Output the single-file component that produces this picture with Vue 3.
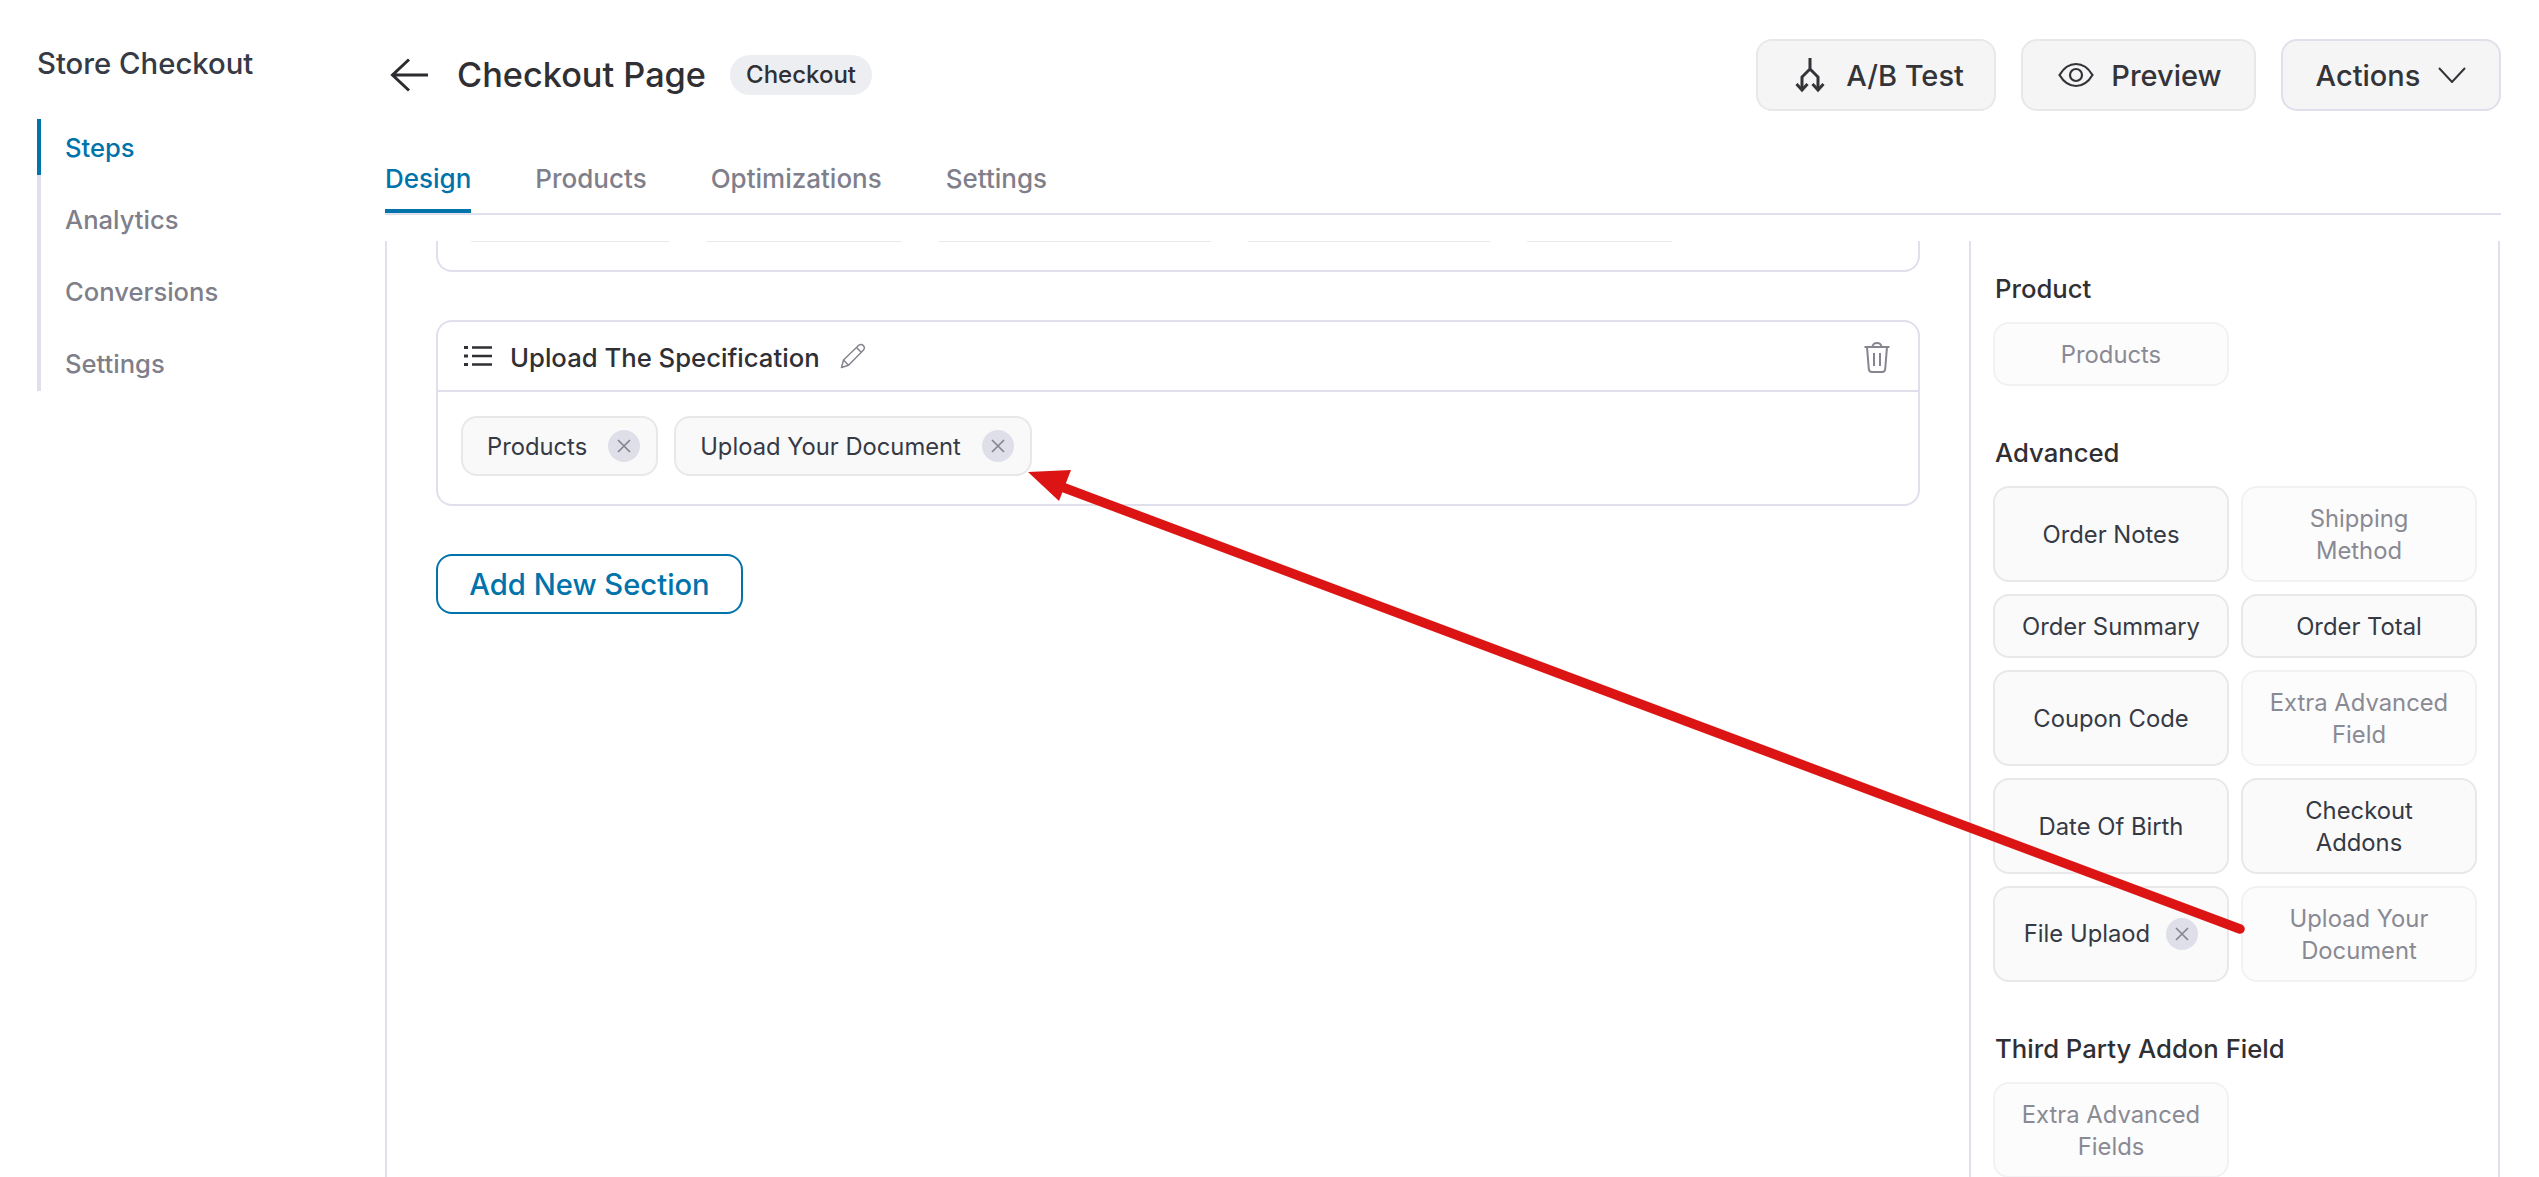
<script setup>
const navItems = ['Steps', 'Analytics', 'Conversions', 'Settings']
const tabs = ['Design', 'Products', 'Optimizations', 'Settings']
const stubs = [198, 196, 272, 242, 145]
const advanced = [
  { label: 'Order Notes' },
  { label: 'Shipping Method', off: true },
  { label: 'Order Summary', short: true },
  { label: 'Order Total', short: true },
  { label: 'Coupon Code' },
  { label: 'Extra Advanced Field', off: true },
  { label: 'Date Of Birth' },
  { label: 'Checkout Addons' },
  { label: 'File Uplaod', remove: true },
  { label: 'Upload Your Document', off: true }
]
</script>

<template>
  <div class="page">
    <aside class="side">
      <div class="store">Store Checkout</div>
      <nav class="nav">
        <a v-for="(n, i) in navItems" :key="n" class="nav-item" :class="{ active: i === 0 }">{{ n }}</a>
      </nav>
    </aside>

    <main class="main">
      <header class="head">
        <svg class="back" width="38" height="34" viewBox="0 0 38 34" fill="none" stroke="#2b2b30" stroke-width="3">
          <path d="M38 17H3M19 1.500 2.500 17 19 32.500" />
        </svg>
        <h1 class="title">Checkout Page</h1>
        <span class="badge">Checkout</span>
        <div class="actions">
          <button class="btn ab">
            <svg width="32" height="36" viewBox="0 0 32 36" fill="none" stroke="#333338" stroke-width="3">
              <path d="M16 1v11L8 20v12M16 12l8 8v12" />
              <path d="M2.500 27 8 33l5.500-6M18.500 27l5.500 6 5.500-6" stroke-linejoin="miter" />
            </svg>
            A/B Test
          </button>
          <button class="btn pv">
            <svg width="36" height="26" viewBox="0 0 36 26" fill="none" stroke="#333338" stroke-width="2.200">
              <path d="M1.500 13C6 5.500 11.500 2 18 2s12 3.500 16.500 11C30 20.500 24.500 24 18 24S6 20.500 1.500 13Z" />
              <circle cx="18" cy="13" r="6" />
            </svg>
            Preview
          </button>
          <button class="btn act">
            Actions
            <svg width="28" height="16" viewBox="0 0 28 16" fill="none" stroke="#333338" stroke-width="2">
              <path d="M1 1 14 15 27 1" />
            </svg>
          </button>
        </div>
      </header>

      <div class="tabs">
        <a v-for="(t, i) in tabs" :key="t" class="tab" :class="{ active: i === 0 }">{{ t }}</a>
      </div>

      <div class="body">
        <section class="canvas">
          <div class="card-clipped">
            <span v-for="(w, i) in stubs" :key="i" class="stub" :style="{ width: w + 'px' }"></span>
          </div>

          <div class="card">
            <div class="card-head">
              <svg class="list-ic" width="28" height="22" viewBox="0 0 28 22" fill="none" stroke="#2f2f34">
                <path d="M0 2.500h4M0 11h4M0 19.500h4" stroke-width="3.200" />
                <path d="M8 2.500h20M8 11h20M8 19.500h20" stroke-width="2.600" />
              </svg>
              <span class="card-title">Upload The Specification</span>
              <svg class="pencil" width="26" height="26" viewBox="0 0 26 26" fill="none" stroke="#85858f" stroke-width="1.500" stroke-linejoin="round">
                <path d="M1.500 24.500 3.500 17 18.500 2.500c1.500-1.400 3.500-1.400 4.800 0s1.300 3.300 0 4.700L8.500 22.300Z" />
                <path d="M16.500 4.500 21.500 9.500M3.500 17 8.500 22.300" />
              </svg>
              <svg class="trash" width="26" height="31" viewBox="0 0 26 31" fill="none" stroke="#85858f" stroke-width="2">
                <path d="M0.500 5h25M3 5l1.800 22c.2 2 1.300 3 3 3h10.400c1.700 0 2.800-1 3-3L23 5M8.500 5C8.500 2.600 10.500 1 13 1s4.500 1.600 4.500 4M10 11v13M16 11v13" />
              </svg>
            </div>
            <div class="card-body">
              <div class="chip">
                Products
                <span class="x"><svg width="14" height="14" viewBox="0 0 14 14" stroke="#85858f" stroke-width="1.700"><path d="M1 1l12 12M13 1 1 13" /></svg></span>
              </div>
              <div class="chip">
                Upload Your Document
                <span class="x"><svg width="14" height="14" viewBox="0 0 14 14" stroke="#85858f" stroke-width="1.700"><path d="M1 1l12 12M13 1 1 13" /></svg></span>
              </div>
            </div>
          </div>

          <button class="add">Add New Section</button>
        </section>

        <aside class="panel">
          <h3 class="group">Product</h3>
          <div class="grid">
            <div class="field off short">Products</div>
          </div>

          <h3 class="group next">Advanced</h3>
          <div class="grid">
            <div
              v-for="f in advanced"
              :key="f.label"
              class="field"
              :class="{ off: f.off, short: f.short, rem: f.remove }"
            >
              <span>{{ f.label }}</span>
              <span v-if="f.remove" class="x"><svg width="14" height="14" viewBox="0 0 14 14" stroke="#85858f" stroke-width="1.700"><path d="M1 1l12 12M13 1 1 13" /></svg></span>
            </div>
          </div>

          <h3 class="group next">Third Party Addon Field</h3>
          <div class="grid">
            <div class="field off">Extra Advanced Fields</div>
          </div>
        </aside>
      </div>
    </main>

    <svg class="pointer" width="2539" height="1177" viewBox="0 0 2539 1177" fill="none">
      <path d="M1062 487 2240 929" stroke="#dc1414" stroke-width="9.500" stroke-linecap="round" />
      <path d="M1028 472 1071 470 1059 501Z" fill="#dc1414" />
    </svg>
  </div>
</template>

<style>
html, body { margin: 0; background: #fff; }
</style>

<style scoped>
.page {
  position: relative;
  display: flex;
  width: 2539px;
  height: 1177px;
  overflow: hidden;
  background: #fff;
  font-family: Inter, "Noto Sans", sans-serif;
  color: #2f2f34;
}
.side { width: 348px; margin-left: 37px; flex: none; }
.store {
  margin-top: 45px;
  line-height: 38px;
  font-size: 29.300px;
  font-weight: 500;
  color: #353a45;
}
.nav {
  margin-top: 36px;
  display: flex;
  flex-direction: column;
  gap: 16px;
  width: 200px;
  background: linear-gradient(#e0dfec, #e0dfec) left / 4px 100% no-repeat;
}
.nav-item {
  display: flex;
  align-items: center;
  height: 56px;
  padding-left: 28px;
  font-size: 25.600px;
  font-weight: 500;
  color: #7f7f8b;
}
.nav-item.active { color: #0073aa; border-left: 4px solid #0073aa; padding-left: 24px; }

.main { width: 2116px; flex: none; }
.head {
  display: flex;
  align-items: center;
  height: 72px;
  margin-top: 39px;
}
.back { margin-left: 5px; flex: none; }
.title {
  margin: 0 0 0 29px;
  font-size: 34.300px;
  line-height: 44px;
  font-weight: 500;
  color: #2f2f34;
}
.badge {
  margin-left: 24px;
  height: 40px;
  line-height: 40px;
  padding: 0 16px;
  border-radius: 20px;
  background: #eceef1;
  font-size: 24px;
  font-weight: 500;
}
.actions { margin-left: auto; display: flex; gap: 25px; }
.btn {
  display: flex;
  align-items: center;
  justify-content: center;
  height: 72px;
  box-sizing: border-box;
  border: 2px solid #e8e8ea;
  border-radius: 16px;
  background: #f5f5f5;
  font-family: inherit;
  font-size: 29px;
  font-weight: 500;
  color: #333338;
}
.ab { width: 240px; gap: 20px; padding: 0 0 0 6px; margin-left: 1px; }
.pv { width: 235px; gap: 17px; padding: 0 0 0 3px; }
.act { width: 220px; gap: 18px; border-color: #e0dfec; padding: 0; }

.tabs {
  display: flex;
  gap: 64px;
  height: 70px;
  margin-top: 32px;
  border-bottom: 2px solid #e0dfec;
  box-sizing: content-box;
}
.tab {
  height: 70px;
  box-sizing: border-box;
  padding-top: 20px;
  line-height: 32px;
  font-size: 26px;
  font-weight: 500;
  color: #7f7f8b;
}
.tab.active { color: #0073aa; border-bottom: 4px solid #0073aa; }

.body { display: flex; margin-top: 26px; height: 936px; }
.canvas {
  width: 1584px;
  box-sizing: border-box;
  border-left: 2px solid #e0dfec;
  padding-left: 49px;
  flex: none;
}
.card-clipped {
  width: 1484px;
  height: 31px;
  box-sizing: border-box;
  border: 2px solid #e0dfec;
  border-top: 0;
  border-radius: 0 0 16px 16px;
  padding-left: 33px;
  display: flex;
  gap: 37px;
  align-items: flex-start;
}
.stub { height: 1px; background: #e8e8ee; }
.card {
  width: 1484px;
  box-sizing: border-box;
  margin-top: 48px;
  border: 2px solid #e0dfec;
  border-radius: 16px;
}
.card-head {
  display: flex;
  align-items: center;
  height: 70px;
  box-sizing: border-box;
  border-bottom: 2px solid #e0dfec;
  padding: 0 28px 0 26px;
}
.card-title {
  margin-left: 18px;
  padding-top: 2px;
  font-size: 25.700px;
  font-weight: 500;
  color: #2f2f34;
}
.pencil { margin-left: 20px; }
.trash { margin-left: auto; margin-top: 2px; }
.card-body {
  display: flex;
  gap: 16px;
  padding: 24px 24px 28px 23px;
}
.chip {
  display: flex;
  align-items: center;
  gap: 21px;
  height: 60px;
  box-sizing: border-box;
  padding: 0 16px 0 24px;
  border: 2px solid #e8e8ea;
  border-radius: 16px;
  background: #f9f9fa;
  font-size: 23.750px;
  color: #353a45;
}
.x {
  display: flex;
  align-items: center;
  justify-content: center;
  width: 32px;
  height: 32px;
  border-radius: 50%;
  background: #dfdfea;
  flex: none;
}
.add {
  display: block;
  width: 307px;
  height: 60px;
  margin-top: 48px;
  border: 2px solid #0073aa;
  border-radius: 16px;
  background: #fff;
  font-family: inherit;
  font-size: 29.200px;
  font-weight: 500;
  color: #0073aa;
  padding: 0;
}

.panel {
  width: 531px;
  box-sizing: border-box;
  flex: none;
  border-left: 2px solid #e0dfec;
  border-right: 2px solid #e0dfec;
  padding: 32px 22px 0;
}
.group {
  margin: 0 0 17px 2px;
  font-size: 25.700px;
  line-height: 32px;
  font-weight: 500;
  color: #2f2f34;
}
.group.next { margin-top: 51px; }
.grid {
  display: grid;
  grid-template-columns: 236px 236px;
  gap: 12px;
}
.field {
  display: flex;
  align-items: center;
  justify-content: center;
  height: 96px;
  box-sizing: border-box;
  padding: 1px 24px 0;
  border: 2px solid #e8e8ea;
  border-radius: 16px;
  background: #fafafa;
  font-size: 23.800px;
  line-height: 32px;
  text-align: center;
  color: #353a45;
}
.field.short { height: 64px; }
.field.off { background: #fcfcfc; border-color: #f2f2f4; color: #8a8a94; }
.field.rem { gap: 16px; padding: 0; }

.pointer { position: absolute; left: 0; top: 0; pointer-events: none; }
</style>
